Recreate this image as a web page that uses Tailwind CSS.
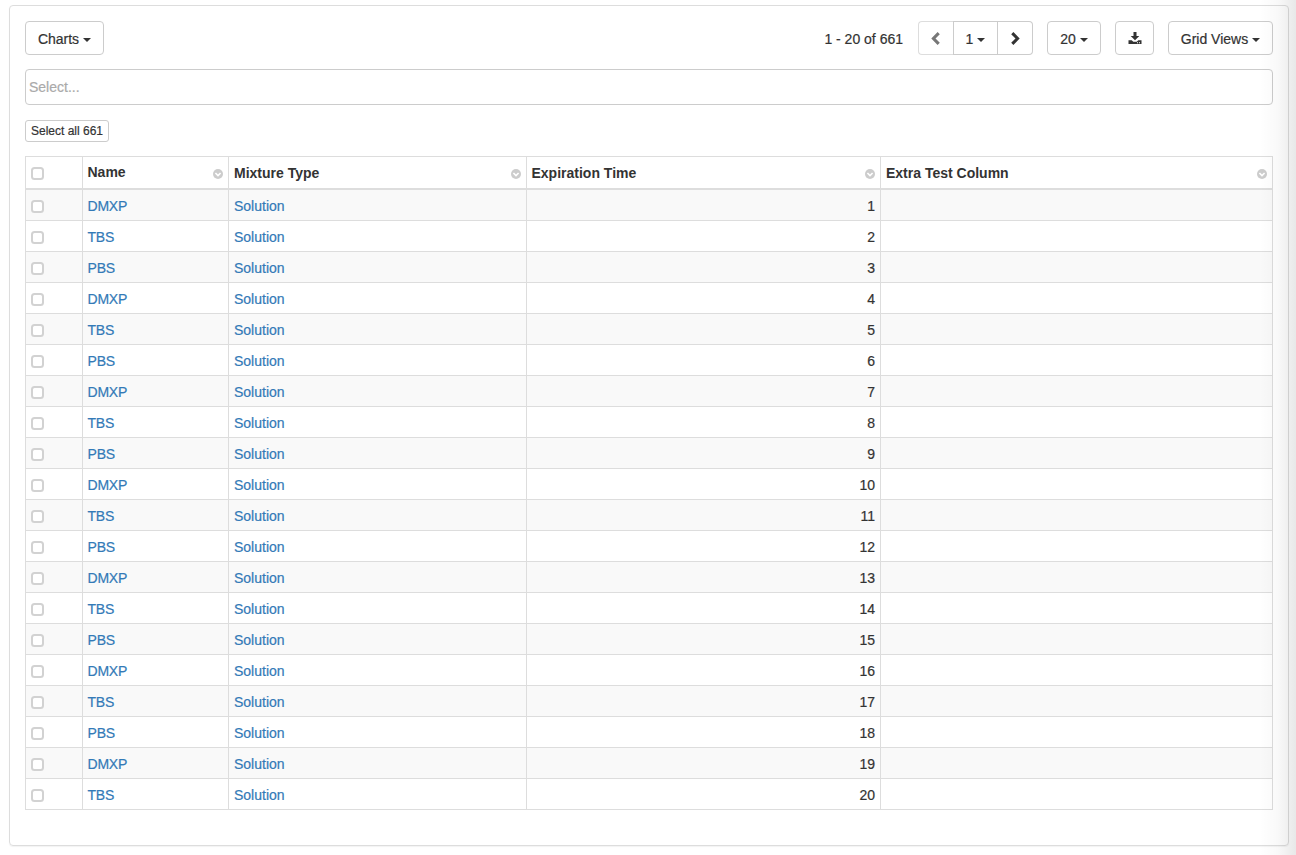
<!DOCTYPE html>
<html lang="en">
<head>
<meta charset="utf-8">
<title>Mixtures</title>
<script src="https://cdn.jsdelivr.net/npm/@tailwindcss/browser@4"></script>
</head>
<body class="h-[855px] overflow-hidden bg-white pl-[9px] pt-[5px] font-['Liberation_Sans',Arial,sans-serif] text-[14px] leading-5 text-[#333] [-webkit-text-stroke:0.2px]">
<main class="h-[841px] w-[1280px] rounded-[4px] border border-[#ddd] p-[15px] shadow-[0_1px_1px_rgba(0,0,0,0.05)]">
  <div class="flex h-[34px] items-stretch justify-between">
    <button class="flex w-[79px] items-center justify-center gap-1 rounded-[4px] border border-[#ccc] pt-px">Charts<svg class="mt-[2px] h-1 w-2" viewBox="0 0 8 4"><path d="M0 0h8L4 4z" fill="#333"/></svg></button>
    <div class="flex items-stretch">
      <span class="mr-[15px] flex items-center pt-px">1 - 20 of 661</span>
      <div class="mr-[14px] flex">
        <button aria-label="Previous page" class="flex w-[35px] items-center justify-center rounded-l-[4px] border border-r-0 border-[#ddd]"><svg class="h-[14px] w-[14px]" viewBox="0 0 14 14"><path d="M8.600 1l2.200 2.200-4.300 4.300 4.300 4.300L8.600 14 2.300 7.500z" fill="#777"/></svg></button>
        <button class="flex w-[45px] items-center justify-center gap-1 border border-[#ccc] pt-px">1<svg class="mt-[2px] h-1 w-2" viewBox="0 0 8 4"><path d="M0 0h8L4 4z" fill="#333"/></svg></button>
        <button aria-label="Next page" class="flex w-[35px] items-center justify-center rounded-r-[4px] border border-l-0 border-[#ccc]"><svg class="h-[14px] w-[14px]" viewBox="0 0 14 14"><path d="M5.400 1L3.200 3.200l4.300 4.300-4.300 4.300L5.400 14l6.300-6.500z" fill="#333"/></svg></button>
      </div>
      <button class="mr-[14px] flex w-[54px] items-center justify-center gap-1 rounded-[4px] border border-[#ccc] pt-px">20<svg class="mt-[2px] h-1 w-2" viewBox="0 0 8 4"><path d="M0 0h8L4 4z" fill="#333"/></svg></button>
      <button aria-label="Export" class="mr-[14px] flex w-[39px] items-center justify-center rounded-[4px] border border-[#ccc]"><svg class="h-[14px] w-[14px]" viewBox="0 0 14 14"><path d="M5.500 1h3v4h2.800L7 9.300 2.700 5h2.800zM.5 9.200h3.200l1.600 1.600h3.400l1.600-1.600h3.200V13H.5zM9 11.300v.9h1v-.9zm2 0v.9h1v-.9z" fill="#333" fill-rule="evenodd"/></svg></button>
      <button class="flex w-[105px] items-center justify-center gap-1 rounded-[4px] border border-[#ccc] pt-px">Grid Views<svg class="mt-[2px] h-1 w-2" viewBox="0 0 8 4"><path d="M0 0h8L4 4z" fill="#333"/></svg></button>
    </div>
  </div>
  <div class="mt-[14px] flex h-9 items-center rounded-[4px] border border-[#ccc] pl-[3px] text-[#aaa]">Select...</div>
  <button class="mt-[15px] flex h-[22px] w-[84px] items-center justify-center whitespace-nowrap rounded-[3px] border border-[#ccc] text-[12px] leading-[18px]">Select all 661</button>
  <div id="grid" class="mt-[14px] border-r border-t border-[#ddd]">
    <div class="flex h-[33px] border-b-2 border-[#ddd] font-bold [-webkit-text-stroke:0]">
      <div class="flex w-[57px] items-center border-l border-[#ddd] pl-[5px] pt-[2px]"><i class="h-[13px] w-[13px] rounded-[3.500px] border-2 border-[#d2d2d2] bg-white"></i></div>
      <div class="flex w-[146px] items-center justify-between border-l border-[#ddd] pl-[4.500px] pr-[5px]"><span class="pb-[2px]">Name</span><svg class="mt-[3px] h-[10px] w-[10px]" viewBox="0 0 10 10"><circle cx="5" cy="5" r="5" fill="#ccc"/><path d="M2.400 4 5 6.500 7.600 4" fill="none" stroke="#fff" stroke-width="1.700"/></svg></div>
      <div class="flex w-[298px] items-center justify-between border-l border-[#ddd] pl-[5px] pr-[5px]"><span>Mixture Type</span><svg class="mt-[3px] h-[10px] w-[10px]" viewBox="0 0 10 10"><circle cx="5" cy="5" r="5" fill="#ccc"/><path d="M2.400 4 5 6.500 7.600 4" fill="none" stroke="#fff" stroke-width="1.700"/></svg></div>
      <div class="flex w-[354px] items-center justify-between border-l border-[#ddd] pl-[4.500px] pr-[5px]"><span>Expiration Time</span><svg class="mt-[3px] h-[10px] w-[10px]" viewBox="0 0 10 10"><circle cx="5" cy="5" r="5" fill="#ccc"/><path d="M2.400 4 5 6.500 7.600 4" fill="none" stroke="#fff" stroke-width="1.700"/></svg></div>
      <div class="flex w-[392px] items-center justify-between border-l border-[#ddd] pl-[5px] pr-[5px]"><span>Extra Test Column</span><svg class="mt-[3px] h-[10px] w-[10px]" viewBox="0 0 10 10"><circle cx="5" cy="5" r="5" fill="#ccc"/><path d="M2.400 4 5 6.500 7.600 4" fill="none" stroke="#fff" stroke-width="1.700"/></svg></div>
    </div>
  </div>
</main>
<div class="pointer-events-none absolute right-0 top-0 h-[855px] w-[36px] bg-linear-to-r from-black/0 via-black/[0.025] to-black/[0.09]"></div>
<script>
  const names = ['DMXP', 'TBS', 'PBS'];
  document.getElementById('grid').insertAdjacentHTML('beforeend', Array.from({ length: 20 }, (_, i) => `
    <div class="flex h-[31px] border-b border-[#ddd] odd:bg-white even:bg-[#f9f9f9]">
      <div class="flex w-[57px] items-center border-l border-[#ddd] pl-[5px] pt-[3px]"><i class="h-[13px] w-[13px] rounded-[3.500px] border-2 border-[#d2d2d2] bg-white"></i></div>
      <div class="flex w-[146px] items-center border-l border-[#ddd] pl-[4.500px] pt-[2px] text-[#337ab7]"><span class="tracking-[-0.2px]">${names[i % 3]}</span></div>
      <div class="flex w-[298px] items-center border-l border-[#ddd] pl-[5px] pt-[2px] text-[#337ab7]">Solution</div>
      <div class="flex w-[354px] items-center justify-end border-l border-[#ddd] pr-[5px] pt-[2px]">${i + 1}</div>
      <div class="w-[392px] border-l border-[#ddd]"></div>
    </div>`).join(''));
</script>
</body>
</html>
